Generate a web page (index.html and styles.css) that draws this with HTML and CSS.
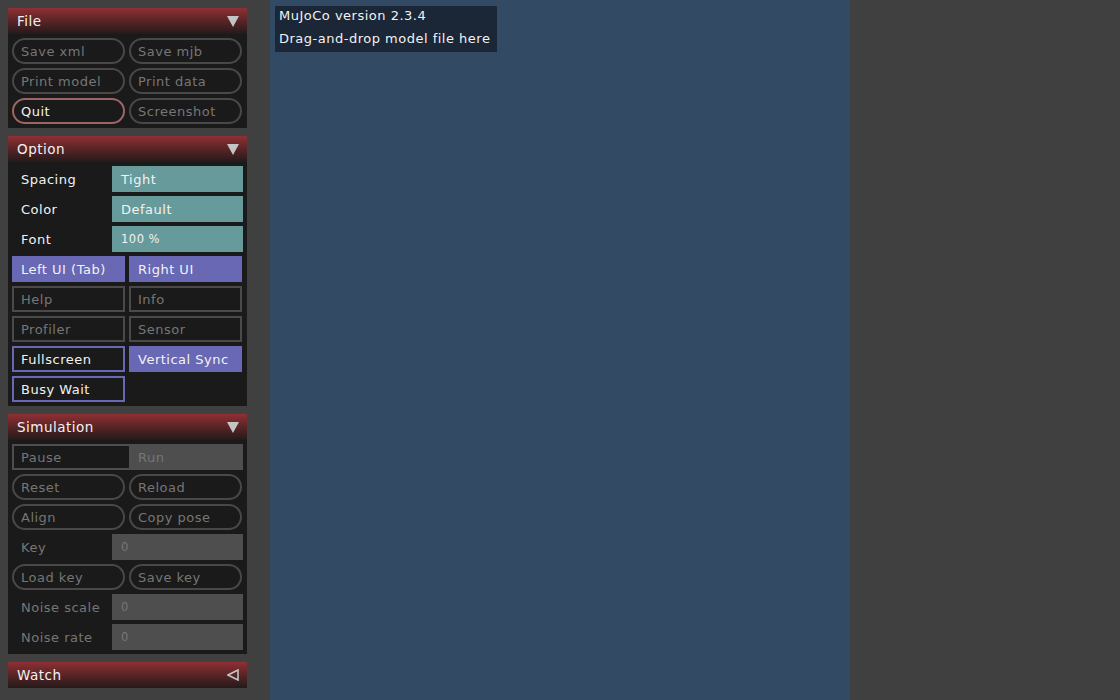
FILE: index.html
```html
<!DOCTYPE html>
<html>
<head>
<meta charset="utf-8">
<link rel="stylesheet" href="styles.css">
</head>
<body>
<div class="app">
  <div class="sidebar">
    <div class="panel">
      <div class="header"><span>File</span><svg class="tri" width="12" height="12" viewBox="0 0 12 12"><polygon points="0,1 12,1 6,12" fill="#c4c4c4"/></svg></div>
      <div class="body grid2">
        <div class="btn round">Save xml</div>
        <div class="btn round">Save mjb</div>
        <div class="btn round">Print model</div>
        <div class="btn round">Print data</div>
        <div class="btn round quit">Quit</div>
        <div class="btn round">Screenshot</div>
      </div>
    </div>
    <div class="panel">
      <div class="header"><span>Option</span><svg class="tri" width="12" height="12" viewBox="0 0 12 12"><polygon points="0,1 12,1 6,12" fill="#c4c4c4"/></svg></div>
      <div class="body">
        <div class="field"><span class="lbl">Spacing</span><span class="val teal">Tight</span></div>
        <div class="field"><span class="lbl">Color</span><span class="val teal">Default</span></div>
        <div class="field"><span class="lbl">Font</span><span class="val teal small">100 %</span></div>
        <div class="grid2">
          <div class="btn on">Left UI (Tab)</div>
          <div class="btn on">Right UI</div>
          <div class="btn check">Help</div>
          <div class="btn check">Info</div>
          <div class="btn check">Profiler</div>
          <div class="btn check">Sensor</div>
          <div class="btn check act">Fullscreen</div>
          <div class="btn on">Vertical Sync</div>
          <div class="btn check act">Busy Wait</div>
        </div>
      </div>
    </div>
    <div class="panel">
      <div class="header"><span>Simulation</span><svg class="tri" width="12" height="12" viewBox="0 0 12 12"><polygon points="0,1 12,1 6,12" fill="#c4c4c4"/></svg></div>
      <div class="body">
        <div class="radio"><div class="opt sel">Pause</div><div class="opt">Run</div></div>
        <div class="grid2">
          <div class="btn round">Reset</div>
          <div class="btn round">Reload</div>
          <div class="btn round">Align</div>
          <div class="btn round">Copy pose</div>
        </div>
        <div class="field"><span class="lbl dim">Key</span><span class="val gray small">0</span></div>
        <div class="grid2">
          <div class="btn round">Load key</div>
          <div class="btn round">Save key</div>
        </div>
        <div class="field"><span class="lbl dim">Noise scale</span><span class="val gray small">0</span></div>
        <div class="field"><span class="lbl dim">Noise rate</span><span class="val gray small">0</span></div>
      </div>
    </div>
    <div class="panel">
      <div class="header"><span>Watch</span><svg class="tri" width="12" height="12" viewBox="0 0 12 12"><polygon points="11,1 11,11 1,6" fill="none" stroke="#c4c4c4" stroke-width="1.6"/></svg></div>
    </div>
  </div>
  <div class="viewport">
    <div class="info">
      <div>MuJoCo version 2.3.4</div>
      <div>Drag-and-drop model file here</div>
    </div>
  </div>
</div>
</body>
</html>
```
FILE: styles.css
```css
html, body {
  margin: 0;
  padding: 0;
  background: #404040;
}
body {
  font-family: "DejaVu Sans", "Liberation Sans", sans-serif;
  font-size: 13px;
  letter-spacing: 0.5px;
  color: #f2f2f2;
}
.app {
  display: flex;
  height: 700px;
}
.sidebar {
  width: 239px;
  padding: 8px;
  display: flex;
  flex-direction: column;
  gap: 8px;
}
.panel {
  background: #1a1a1a;
}
.header {
  height: 26px;
  display: flex;
  align-items: center;
  justify-content: space-between;
  padding: 0 8px 0 9px;
  background: linear-gradient(#8f2f33, #4e2224 60%, #241a1a);
  font-size: 13.5px;
}
.tri {
  display: block;
}
.body {
  padding: 4px;
  display: flex;
  flex-direction: column;
  gap: 4px;
}
.grid2 {
  display: grid;
  grid-template-columns: 113px 113px;
  gap: 4px;
}
.body.grid2 {
  display: grid;
}
.btn {
  height: 26px;
  box-sizing: border-box;
  display: flex;
  align-items: center;
  padding-left: 9px;
  color: #767676;
  white-space: nowrap;
}
.round {
  border: 2px solid #484848;
  border-radius: 13px;
  padding-left: 7px;
}
.quit {
  border-color: #9c6666;
  color: #f2f2f2;
}
.on {
  background: #6868b4;
  color: #f2f2f2;
}
.check {
  border: 2px solid #4a4a4a;
  padding-left: 7px;
}
.check.act {
  border-color: #6868b4;
  color: #f2f2f2;
}
.field {
  display: flex;
  height: 26px;
}
.lbl {
  width: 100px;
  padding-left: 9px;
  box-sizing: border-box;
  display: flex;
  align-items: center;
}
.lbl.dim {
  color: #767676;
}
.val {
  flex: 1;
  display: flex;
  align-items: center;
  padding-left: 9px;
}
.teal {
  background: #679a9a;
  color: #f2f2f2;
}
.gray {
  background: #4e4e4e;
  color: #767676;
}
.small {
  font-size: 11.5px;
}
.radio {
  display: flex;
  height: 26px;
  box-sizing: border-box;
  border: 2px solid #4e4e4e;
}
.opt {
  flex: 1;
  box-sizing: border-box;
  display: flex;
  align-items: center;
  padding-left: 9px;
  color: #767676;
  background: #4e4e4e;
}
.opt.sel {
  flex: 0 0 115px;
  padding-left: 7px;
  background: #1a1a1a;
}
.viewport {
  margin-left: 15px;
  width: 580px;
  background: #324a63;
  position: relative;
}
.info {
  position: absolute;
  left: 5px;
  top: 6px;
  width: 222px;
  height: 46px;
  box-sizing: border-box;
  padding: 0 4px 5px;
  background: #1b2636;
  display: flex;
  flex-direction: column;
  justify-content: center;
  line-height: 23px;
}
```
